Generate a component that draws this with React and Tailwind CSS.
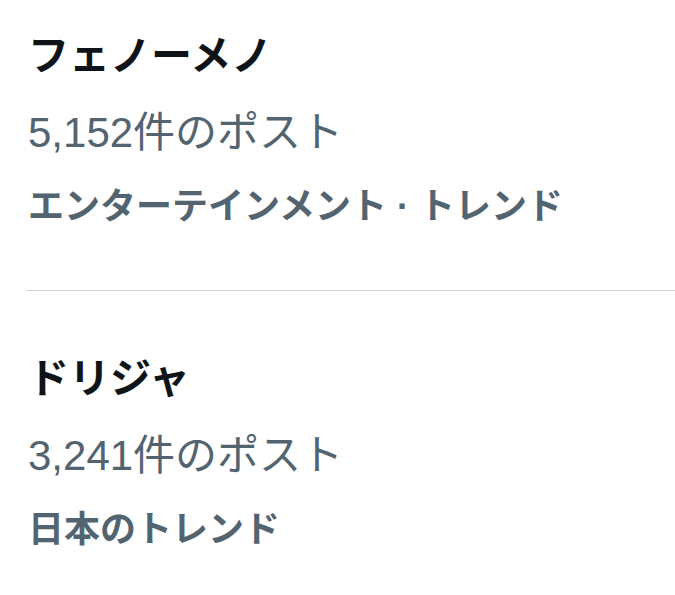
import React from 'react';

const trends = [
  { name: 'フェノーメノ', posts: '5,152件のポスト', category: 'エンターテインメント · トレンド' },
  { name: 'ドリジャ', posts: '3,241件のポスト', category: '日本のトレンド' },
];

const TrendItem = ({ trend, first }) => (
  <div className={first ? 'pt-[18px] pb-[48px] px-[28px]' : 'pt-[50px] pb-[48px] px-[28px]'}>
    <div className="text-[41px] leading-[76px] font-bold text-[#0f1419]">{trend.name}</div>
    <div className="text-[42px] leading-[78px] text-[#536471]">{trend.posts}</div>
    <div className="text-[36px] leading-[70px] font-bold text-[#536471]">{trend.category}</div>
  </div>
);

export default function App() {
  return (
    <div
      className="w-[675px] h-[595px] overflow-hidden bg-white"
      style={{ fontFamily: '"Liberation Sans", "Noto Sans CJK JP", sans-serif' }}
    >
      <TrendItem trend={trends[0]} first />
      <div className="ml-[27px] h-px bg-[#cfcfcf]" />
      <TrendItem trend={trends[1]} />
    </div>
  );
}
